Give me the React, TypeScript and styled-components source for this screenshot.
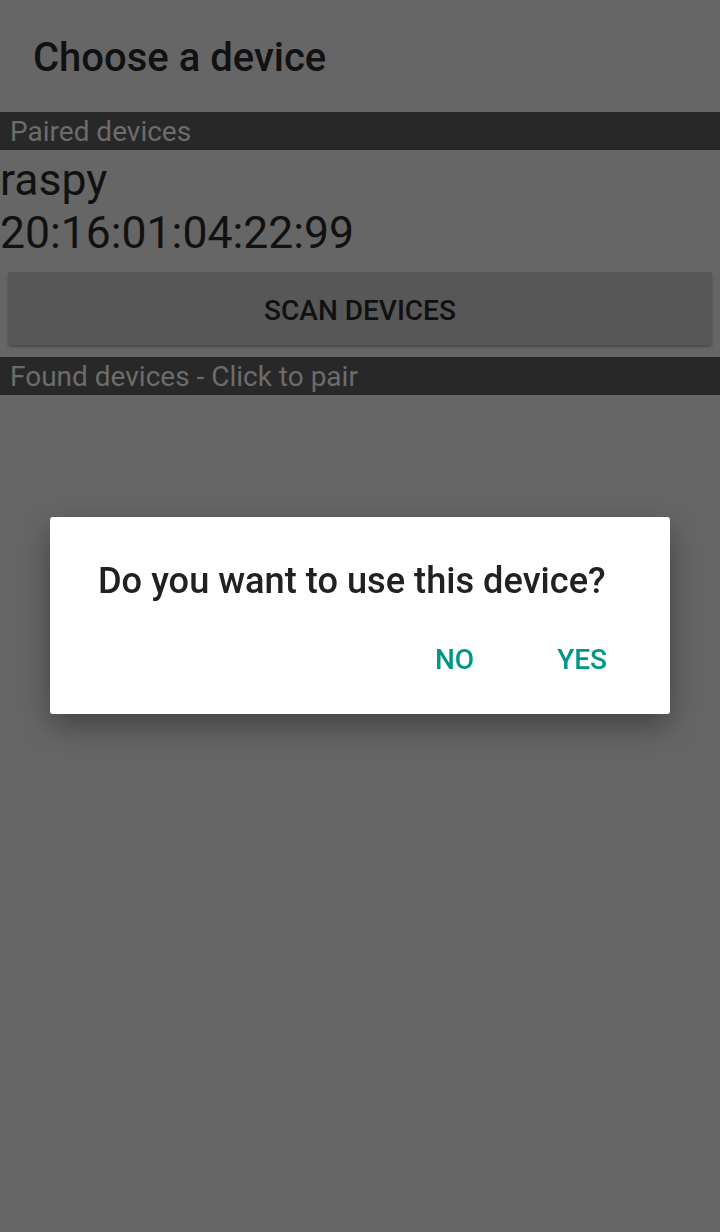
import React from 'react';
import styled, { createGlobalStyle } from 'styled-components';

const GlobalStyle = createGlobalStyle`
  html, body {
    margin: 0;
    padding: 0;
    background-color: #666666;
  }
  body {
    font-family: Roboto, "Liberation Sans", sans-serif;
  }
`;

const Screen = styled.div`
  display: flex;
  flex-direction: column;
  width: 720px;
  height: 1232px;
  background-color: #666666;
  overflow: hidden;
`;

const TitleBar = styled.header`
  display: flex;
  align-items: center;
  height: 112px;
  padding-left: 33px;
  padding-top: 2px;
  box-sizing: border-box;
`;

const Title = styled.h1`
  margin: 0;
  font-size: 40px;
  font-weight: 500;
  color: #111111;
`;

const SectionHeader = styled.div`
  display: flex;
  align-items: center;
  height: 38px;
  padding-left: 10px;
  background-color: #282828;
  color: #6c6c6c;
  font-size: 28px;
`;

const DeviceItem = styled.div`
  padding-top: 4px;
  font-size: 44.5px;
  line-height: 53px;
  color: #111111;
`;

const ScanButton = styled.button`
  margin: 12px 8px;
  height: 73px;
  border: none;
  border-radius: 3px;
  background-color: #575757;
  box-shadow: 0 2px 3px rgba(0, 0, 0, 0.28);
  font-family: Roboto, "Liberation Sans", sans-serif;
  font-size: 28px;
  font-weight: 500;
  color: #111111;
  padding-top: 4px;
`;

const Scrim = styled.div`
  position: fixed;
  inset: 0;
  display: flex;
  align-items: center;
  justify-content: center;
`;

const Dialog = styled.div`
  display: flex;
  flex-direction: column;
  width: 620px;
  box-sizing: border-box;
  padding: 44px 0 36px;
  margin-top: -1px;
  background-color: #ffffff;
  border-radius: 3px;
  box-shadow: 0 12px 30px rgba(0, 0, 0, 0.35);
`;

const DialogTitle = styled.div`
  padding-left: 48px;
  font-size: 36.2px;
  line-height: 40px;
  font-weight: 500;
  color: #212121;
`;

const DialogActions = styled.div`
  display: flex;
  justify-content: flex-end;
  gap: 83px;
  margin-top: 41px;
  padding-right: 63px;
`;

const ActionButton = styled.button`
  padding: 0;
  border: none;
  background: none;
  font-family: Roboto, "Liberation Sans", sans-serif;
  font-size: 28px;
  line-height: 36px;
  font-weight: 500;
  color: #009688;
`;

const App = () => {
  return (
    <>
      <GlobalStyle />
      <Screen>
        <TitleBar>
          <Title>Choose a device</Title>
        </TitleBar>
        <SectionHeader>Paired devices</SectionHeader>
        <DeviceItem>
          raspy
          <br />
          20:16:01:04:22:99
        </DeviceItem>
        <ScanButton>SCAN DEVICES</ScanButton>
        <SectionHeader>Found devices - Click to pair</SectionHeader>
      </Screen>
      <Scrim>
        <Dialog>
          <DialogTitle>Do you want to use this device?</DialogTitle>
          <DialogActions>
            <ActionButton>NO</ActionButton>
            <ActionButton>YES</ActionButton>
          </DialogActions>
        </Dialog>
      </Scrim>
    </>
  );
};

export default App;
